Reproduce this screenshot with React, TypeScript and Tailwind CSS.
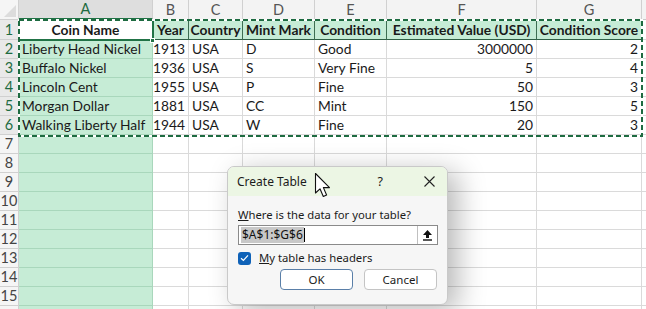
import React from "react";

const COLS = ["A", "B", "C", "D", "E", "F", "G"];
const W = [134, 36, 54, 72, 72, 150, 105];
const HEAD = ["Coin Name", "Year", "Country", "Mint Mark", "Condition", "Estimated Value (USD)", "Condition Score"];
const DATA = [
  ["Liberty Head Nickel", "1913", "USA", "D", "Good", "3000000", "2"],
  ["Buffalo Nickel", "1936", "USA", "S", "Very Fine", "5", "4"],
  ["Lincoln Cent", "1955", "USA", "P", "Fine", "50", "3"],
  ["Morgan Dollar", "1881", "USA", "CC", "Mint", "150", "5"],
  ["Walking Liberty Half", "1944", "USA", "W", "Fine", "20", "3"],
];
const RIGHT = [false, true, false, false, false, true, true];

function RowHeader({ n, h }: { n: number; h: number }) {
  const sel = n <= 6;
  return (
    <div
      className={`w-[19px] shrink-0 border-r border-b border-[#d0d0d0] flex items-center justify-center text-[14.5px] ${
        sel ? "bg-[#e9e9e9] text-[#1e6b41]" : "bg-[#f5f5f5] text-[#444]"
      }`}
      style={{ height: h }}
    >
      {n}
    </div>
  );
}

function Row({ n, h, cells }: { n: number; h: number; cells: string[] | null }) {
  return (
    <div className="flex">
      <RowHeader n={n} h={h} />
      {W.map((w, i) => {
        const isA = i === 0;
        const isHead = n === 1;
        let cls = "border-r border-b flex items-center px-[3px] overflow-hidden whitespace-nowrap ";
        if (isHead) {
          cls += isA
            ? "bg-white border-[#3d7a57] justify-center font-bold "
            : "bg-[#c6ecd6] border-r-[#3d6e52] border-b-[#2f5f45] justify-center font-bold ";
        } else if (isA) {
          cls += "bg-[#c6ecd6] border-[#a9d7bc] ";
        } else {
          cls += "bg-white border-[#dadada] ";
          if (RIGHT[i]) cls += "justify-end ";
        }
        return (
          <div key={i} className={cls} style={{ width: w, height: h }}>
            {cells ? cells[i] : ""}
          </div>
        );
      })}
      <div className="flex-1 border-b border-[#dadada] bg-white" style={{ height: h }} />
    </div>
  );
}

export default function App() {
  const rows: { n: number; h: number; cells: string[] | null }[] = [];
  rows.push({ n: 1, h: 20, cells: HEAD });
  DATA.forEach((d, i) => rows.push({ n: i + 2, h: 19, cells: d }));
  for (let n = 7; n <= 16; n++) rows.push({ n, h: 19, cells: null });

  return (
    <div
      className="relative w-[646px] h-[309px] overflow-hidden bg-white text-[#1a1a1a] text-[13.8px] leading-[18px]"
      style={{ fontFamily: "Lato, 'Open Sans', sans-serif" }}
    >
      {/* column header row */}
      <div className="flex h-[20px] text-[14.5px]">
        <div className="w-[19px] shrink-0 bg-[#f5f5f5] border-r border-b border-[#d0d0d0] relative">
          <div className="absolute right-[2px] bottom-[2px] w-0 h-0 border-l-[12px] border-l-transparent border-b-[12px] border-b-[#dcdcdc]" />
        </div>
        {COLS.map((c, i) => (
          <div
            key={c}
            className={`shrink-0 flex items-center justify-center border-r border-[#d0d0d0] ${
              i === 0
                ? "bg-[#dedede] text-[#1e6b41] border-b-2 border-b-[#217346]"
                : "bg-[#f3f3f3] text-[#555] border-b border-b-[#c8c8c8]"
            }`}
            style={{ width: W[i], height: 20 }}
          >
            {c}
          </div>
        ))}
        <div className="flex-1 bg-[#f3f3f3] border-b border-[#c8c8c8]" />
      </div>

      {rows.map((r) => (
        <Row key={r.n} n={r.n} h={r.h} cells={r.cells} />
      ))}

      {/* active cell A1 */}
      <div className="absolute left-[18px] top-[19px] w-[136px] h-[22px] border-2 border-[#217346]" />
      <div className="absolute left-[150px] top-[38px] w-[5px] h-[5px] bg-[#217346] border border-white" />

      {/* marching ants */}
      <svg className="absolute left-[18px] top-[19px]" width="625" height="118">
        <rect x="1" y="1" width="623" height="116" fill="none" stroke="#ffffff" strokeWidth="2" />
        <rect x="1" y="1" width="623" height="116" fill="none" stroke="#1e6b41" strokeWidth="2" strokeDasharray="5 3" />
      </svg>

      {/* Create Table dialog */}
      <div
        className="absolute left-[227px] top-[166px] w-[221px] h-[139px] rounded-[7px] border border-[#c9c9c9] bg-[#f6f6f6] overflow-hidden shadow-[10px_6px_28px_rgba(0,0,0,0.28)] text-[11.3px] text-[#1b1b1b]"
        style={{ fontFamily: "'Segoe UI', 'Noto Sans', 'Open Sans', sans-serif" }}
      >
        <div className="h-[29px] bg-[#ecf6e4] flex items-center pl-[9px] pr-[12px]">
          <span className="text-[12px]">Create Table</span>
          <span className="ml-auto mr-[41px] text-[12.5px]">?</span>
          <svg width="11" height="11" viewBox="0 0 11 11">
            <path d="M0.5 0.5 L10.5 10.5 M10.5 0.5 L0.5 10.5" stroke="#222" strokeWidth="1.1" />
          </svg>
        </div>
        <div className="px-[10px] pt-[11px]">
          <div className="leading-[16px]">
            <span className="underline">W</span>here is the data for your table?
          </div>
          <div className="mt-[2px] h-[20px] w-[200px] border border-[#8a8a8a] bg-white flex items-center">
            <div className="flex items-center pl-[2px] flex-1">
              <span className="bg-[#c8c8c8] text-[#111] px-[1px] leading-[16px] text-[12px]">$A$1:$G$6</span>
              <span className="w-px h-[14px] bg-black" />
            </div>
            <div className="w-[20px] h-[18px] border-l border-[#c0c0c0] flex items-center justify-center bg-white">
              <svg width="11" height="12" viewBox="0 0 11 12">
                <path d="M5.5 1 L10 6 L7 6 L7 9 L4 9 L4 6 L1 6 Z" fill="#111" />
                <rect x="1" y="10.3" width="9" height="1.4" fill="#111" />
              </svg>
            </div>
          </div>
          <div className="mt-[5px] flex items-center">
            <div className="w-[13px] h-[13px] rounded-[3px] bg-[#0f62b8] flex items-center justify-center">
              <svg width="9" height="8" viewBox="0 0 9 8">
                <path d="M1 4.2 L3.4 6.5 L8 1.3" fill="none" stroke="white" strokeWidth="1.2" />
              </svg>
            </div>
            <span className="ml-[8px] leading-[16px]">
              <span className="underline">M</span>y table has headers
            </span>
          </div>
          <div className="mt-[3px] flex justify-end gap-[11px] pr-[0px]">
            <button className="w-[73px] h-[21px] rounded-[4px] border border-[#5a7fa8] bg-white text-[11.5px] leading-none">
              OK
            </button>
            <button className="w-[73px] h-[21px] rounded-[4px] border border-[#c4c4c4] bg-white text-[11.5px] leading-none">
              Cancel
            </button>
          </div>
        </div>
      </div>

      {/* mouse cursor */}
      <svg className="absolute left-[314px] top-[172px]" width="20" height="28" viewBox="0 0 20 28">
        <path
          d="M1.5 1.5 L1.5 21 L6 16.8 L9.3 24.5 L12.6 23 L9.4 15.6 L15.5 15.6 Z"
          fill="white"
          stroke="#111"
          strokeWidth="1.1"
          strokeLinejoin="round"
        />
      </svg>
    </div>
  );
}
